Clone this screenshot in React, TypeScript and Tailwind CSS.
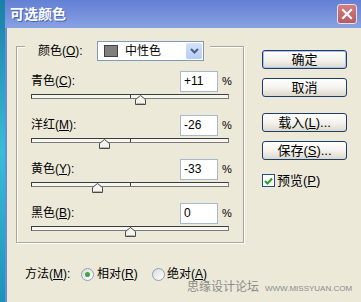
import React from "react";

const FONT = '"Liberation Sans","Noto Sans CJK SC",sans-serif';

function Track({ value }: { value: number }) {
  const center = 99 + value * 0.99;
  return (
    <div className="relative mt-[2px] h-[10px]">
      <div className="relative h-[5px] border border-t-[#3c3c3c] border-l-[#3c3c3c] border-b-[#7a7a7a] border-r-[#7a7a7a] bg-[#f7f6f1]">
        <div className="absolute left-[98px] top-0 h-full w-px bg-[#3c3c3c]" />
      </div>
      <svg
        className="absolute top-[1px]"
        style={{ left: center - 5.5 }}
        width="11"
        height="10"
        viewBox="0 0 11 10"
      >
        <path d="M0.5 9.5 V4.5 L5.5 0.5 L10.5 4.5 V9.5 Z" fill="#f4f3ee" stroke="#4a4a4a" />
        <path d="M1.5 8.5 H9.5" stroke="#b8b5a8" />
      </svg>
    </div>
  );
}

function SliderRow({
  name,
  k,
  value,
  text,
}: {
  name: string;
  k: string;
  value: number;
  text: string;
}) {
  return (
    <div>
      <div className="flex h-[22px] items-center">
        <span className="flex-1 text-[12px] leading-[14px]">
          {name}(<u>{k}</u>):
        </span>
        <div className="flex h-[21px] w-[38px] items-center border border-[#a5b9cf] bg-white pl-[3px] text-[12px] leading-none">
          {text}
        </div>
        <span className="w-[11px] pl-[4px] text-[11px] leading-none">%</span>
      </div>
      <Track value={value} />
    </div>
  );
}

function XPButton({ children, def }: { children: React.ReactNode; def?: boolean }) {
  return (
    <div
      className={
        "flex h-[19px] w-[85px] items-center justify-center rounded-[3px] border border-[#1f3b6b] bg-gradient-to-b from-[#ffffff] via-[#f4f3ee] to-[#dcd8cb] text-[13px] leading-none " +
        (def ? "shadow-[inset_0_0_0_1px_#a9c3ee]" : "")
      }
    >
      {children}
    </div>
  );
}

export default function App() {
  return (
    <div
      className="flex h-[302px] w-[361px] overflow-hidden bg-[#ece9d8] text-black"
      style={{ fontFamily: FONT }}
    >
      <div className="h-full w-[5px] bg-gradient-to-b from-[#1a7fa6] via-[#36bfd9] to-[#1b93b7]" />
      <div className="flex flex-1 flex-col">
        {/* title bar */}
        <div className="flex h-[28px] items-center justify-between bg-gradient-to-b from-[#6380d4] to-[#87a1e2] pl-[5px] pr-[4px]">
          <span className="text-[14px] font-bold leading-none text-white [text-shadow:1px_1px_0_#4a64b0]">
            可选颜色
          </span>
          <div className="flex h-[20px] w-[20px] items-center justify-center rounded-[3px] border border-[#f1dde0] bg-gradient-to-b from-[#d27f82] to-[#b35b64]">
            <svg width="12" height="12" viewBox="0 0 12 12">
              <path d="M2 2 L10 10 M10 2 L2 10" stroke="white" strokeWidth="2.2" strokeLinecap="square" />
            </svg>
          </div>
        </div>

        {/* body */}
        <div className="relative flex flex-1 border-l-2 border-[#6c89d6]">
          {/* left column */}
          <div className="flex flex-col">
            <div className="ml-[9px] mt-[18px] w-[228px] border border-[#aca899] px-[14px] pb-[6px] shadow-[inset_1px_1px_0_#ffffff,1px_1px_0_#ffffff]">
              {/* legend */}
              <div className="-ml-[6px] -mt-[6px] flex h-[20px] w-[185px] items-center bg-[#ece9d8] pl-[13px]">
                <span className="w-[59px] text-[12px] leading-[14px]">
                  颜色(<u>O</u>):
                </span>
                <div className="flex h-[20px] w-[107px] items-center border border-[#7f9db9] bg-white pl-[6px]">
                  <div className="h-[12px] w-[14px] border border-[#404040] bg-[#7f7f7f]" />
                  <span className="ml-[7px] flex-1 text-[12px] leading-none">中性色</span>
                  <div className="mr-[1px] flex h-[16px] w-[16px] items-center justify-center rounded-[2px] bg-gradient-to-b from-[#d6e3fc] to-[#b6cbf5]">
                    <svg width="9" height="6" viewBox="0 0 9 6">
                      <path d="M1 1 L4.5 4.5 L8 1" fill="none" stroke="#4d6185" strokeWidth="2" />
                    </svg>
                  </div>
                </div>
              </div>

              <div className="mt-[9px] flex flex-col gap-[10px]">
                <SliderRow name="青色" k="C" value={11} text="+11" />
                <SliderRow name="洋红" k="M" value={-26} text="-26" />
                <SliderRow name="黄色" k="Y" value={-33} text="-33" />
                <SliderRow name="黑色" k="B" value={0} text="0" />
              </div>
            </div>

            {/* method row */}
            <div className="ml-[18px] mt-[24px] flex h-[14px] items-center text-[12px] leading-[14px]">
              <span className="w-[56px]">
                方法(<u>M</u>):
              </span>
              <div className="flex h-[13px] w-[13px] items-center justify-center rounded-full border border-[#8aa2bd] bg-gradient-to-br from-[#dcdcd4] to-[#ffffff]">
                <div className="h-[5px] w-[5px] rounded-full bg-[#3fa33f]" />
              </div>
              <span className="ml-[3px] w-[55px]">
                相对(<u>R</u>)
              </span>
              <div className="h-[13px] w-[13px] rounded-full border border-[#8aa2bd] bg-gradient-to-br from-[#dcdcd4] to-[#ffffff]" />
              <span className="ml-[2px]">
                绝对(<u>A</u>)
              </span>
            </div>
          </div>

          {/* right column */}
          <div className="ml-[18px] mt-[22px] flex flex-col">
            <XPButton def>确定</XPButton>
            <div className="mt-[9px]">
              <XPButton>取消</XPButton>
            </div>
            <div className="mt-[16px]">
              <XPButton>
                载入(<u>L</u>)...
              </XPButton>
            </div>
            <div className="mt-[9px]">
              <XPButton>
                保存(<u>S</u>)...
              </XPButton>
            </div>
            <div className="mt-[14px] flex items-center">
              <div className="flex h-[13px] w-[13px] items-center justify-center border border-[#1c5180] bg-white">
                <svg width="9" height="8" viewBox="0 0 9 8">
                  <path d="M1 4 L3.5 6.5 L8 1.5" fill="none" stroke="#21a121" strokeWidth="2" />
                </svg>
              </div>
              <span className="ml-[2px] text-[13px] leading-none">
                预览(<u>P</u>)
              </span>
            </div>
          </div>

          {/* watermark */}
          <div className="absolute left-[180px] top-[253px] flex items-baseline gap-[6px] whitespace-nowrap text-[#8c8c8c]">
            <span className="text-[12px] leading-none">思缘设计论坛</span>
            <span className="text-[8px] leading-none">WWW.MISSYUAN.COM</span>
          </div>
        </div>
      </div>
    </div>
  );
}
